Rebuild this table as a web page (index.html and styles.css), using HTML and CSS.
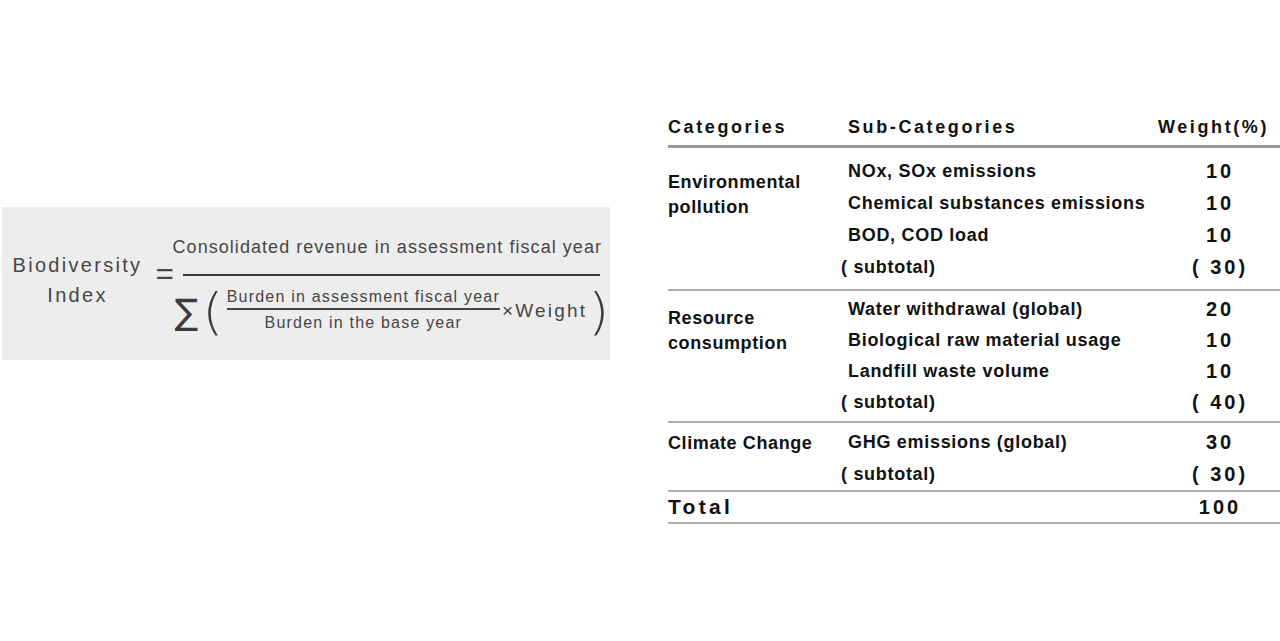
FILE: index.html
```html
<!DOCTYPE html>
<html lang="en">
<head>
<meta charset="utf-8">
<title>Biodiversity Index</title>
<link rel="stylesheet" href="styles.css">
</head>
<body>
<div class="page">
  <div class="formula-panel">
    <div class="label">
      <span>Biodiversity</span>
      <span>Index</span>
    </div>
    <div class="eq">=</div>
    <div class="frac">
      <div class="num">Consolidated revenue in assessment fiscal year</div>
      <div class="den">
        <span class="sigma">∑</span>
        <span class="paren open">(</span>
        <div class="inner">
          <div class="inner-num">Burden in assessment fiscal year</div>
          <div class="inner-den">Burden in the base year</div>
        </div>
        <span class="times">×Weight</span>
        <span class="paren close">)</span>
      </div>
    </div>
  </div>

  <div class="table">
    <div class="head">
      <div>Categories</div>
      <div>Sub-Categories</div>
      <div>Weight(%)</div>
    </div>
    <div class="group g1">
      <div class="cat">Environmental<br>pollution</div>
      <div class="sub">NOx, SOx emissions</div><div class="w">10</div>
      <div class="sub">Chemical substances emissions</div><div class="w">10</div>
      <div class="sub">BOD, COD load</div><div class="w">10</div>
      <div class="sub st">( subtotal)</div><div class="w">( 30)</div>
    </div>
    <div class="group g2">
      <div class="cat">Resource<br>consumption</div>
      <div class="sub">Water withdrawal (global)</div><div class="w">20</div>
      <div class="sub">Biological raw material usage</div><div class="w">10</div>
      <div class="sub">Landfill waste volume</div><div class="w">10</div>
      <div class="sub st">( subtotal)</div><div class="w">( 40)</div>
    </div>
    <div class="group g3">
      <div class="cat">Climate Change</div>
      <div class="sub">GHG emissions (global)</div><div class="w">30</div>
      <div class="sub st">( subtotal)</div><div class="w">( 30)</div>
    </div>
    <div class="total">
      <div class="total-label">Total</div>
      <div></div>
      <div class="w">100</div>
    </div>
  </div>
</div>
</body>
</html>
```

FILE: styles.css
```css
html, body {
  margin: 0;
  padding: 0;
  background: #ffffff;
}

.page {
  display: flex;
  align-items: flex-start;
  width: 1280px;
  height: 641px;
  overflow: hidden;
}

/* ---------- formula ---------- */
.formula-panel {
  margin-left: 2px;
  margin-top: 207px;
  width: 608px;
  height: 153px;
  flex: none;
  background: #ededed;
  display: flex;
  align-items: flex-start;
  color: #464646;
  font-family: "Liberation Sans", Arial, sans-serif;
}

.label {
  display: flex;
  flex-direction: column;
  align-items: center;
  width: 145px;
  margin-left: 3px;
  margin-top: 43px;
  font-size: 20px;
  line-height: 30px;
  letter-spacing: 2.3px;
}

.eq {
  margin-top: 52px;
  margin-left: 6px;
  font-size: 30px;
  line-height: 30px;
  font-weight: normal;
  transform: scaleX(1.05);
}

.frac {
  margin-top: 26px;
  display: flex;
  flex-direction: column;
  width: 430px;
}

.num {
  font-size: 18px;
  line-height: 28px;
  letter-spacing: 1.05px;
  white-space: nowrap;
  padding-bottom: 13px;
  border-bottom: 2px solid #3a3a3a;
  width: 417px;
  margin-left: 9px;
  text-indent: -10px;
}

.den {
  display: flex;
  align-items: center;
  height: 66px;
}

.sigma {
  font-family: "DejaVu Sans", sans-serif;
  font-size: 35px;
  line-height: 40px;
  margin-left: 1px;
  margin-top: 6px;
  color: #3c3c3c;
}

.paren {
  font-family: "DejaVu Sans", sans-serif;
  font-weight: 200;
  font-size: 40px;
  line-height: 44px;
  margin-top: 4px;
  color: #3c3c3c;
  transform: scale(1.35, 1.25);
}

.paren.open {
  margin-left: 7px;
  margin-right: 6px;
}

.paren.close {
  margin-left: 4px;
}

.inner {
  display: flex;
  flex-direction: column;
  align-items: center;
  margin-top: 4px;
  font-size: 16px;
  letter-spacing: 1.2px;
  white-space: nowrap;
}

.inner-num {
  line-height: 22px;
  border-bottom: 2px solid #444;
}

.inner-den {
  line-height: 26px;
}

.times {
  font-size: 19px;
  letter-spacing: 2.2px;
  margin-left: 2px;
  margin-top: 4px;
  white-space: nowrap;
}

/* ---------- table ---------- */
.table {
  margin-left: 58px;
  margin-top: 109px;
  width: 612px;
  flex: none;
  color: #111;
  font-family: "Liberation Sans", Arial, sans-serif;
  font-weight: bold;
  font-size: 18px;
}

.head,
.group,
.total {
  display: grid;
  grid-template-columns: 180px 310px 122px;
}

.head {
  height: 36px;
  align-items: center;
  letter-spacing: 2.6px;
  border-bottom: 3px solid #9a9a9a;
}

.group {
  grid-auto-rows: 32px;
  border-bottom: 2px solid #b0b0b0;
}

.g1 { padding: 7px 0 6px; }
.g2 { padding: 3px 0 3px; grid-auto-rows: 31px; }
.g3 { padding: 3px 0 0; }

.cat {
  grid-column: 1;
  grid-row: 1 / span 4;
  line-height: 25px;
  letter-spacing: 0.6px;
}
.g1 .cat { padding-top: 15px; }
.g2 .cat { padding-top: 12px; }
.g3 .cat { grid-row: 1 / span 2; padding-top: 5px; }

.sub {
  grid-column: 2;
  display: flex;
  align-items: center;
  letter-spacing: 0.7px;
  white-space: nowrap;
}

.sub.st {
  margin-left: -7px;
}

.w {
  grid-column: 3;
  display: flex;
  align-items: center;
  justify-content: center;
  padding-left: 2px;
  font-size: 20px;
  letter-spacing: 3px;
  white-space: pre;
}

.total {
  height: 30px;
  align-items: center;
  border-bottom: 2px solid #b0b0b0;
}

.total-label {
  font-size: 21px;
  letter-spacing: 3.3px;
}
```
